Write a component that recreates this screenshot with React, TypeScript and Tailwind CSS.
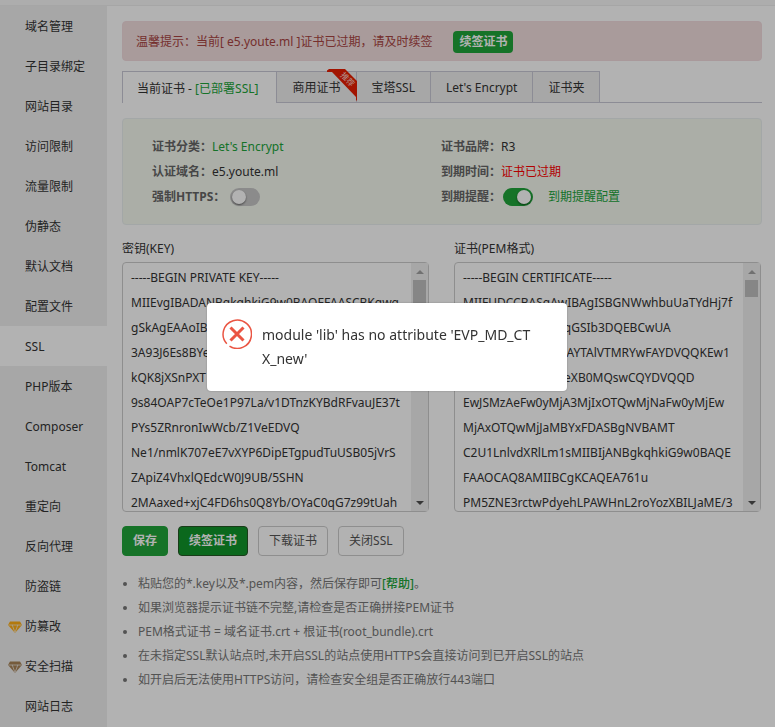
import { useState } from "react";
import clsx from "clsx";

interface MenuItem {
  label: string;
  gem?: "gold" | "bronze";
}

interface PemFieldProps {
  id: string;
  label: string;
  value: string;
  thumb: string;
  onChange: (value: string) => void;
}

const menuItems: MenuItem[] = [
  { label: "域名管理" },
  { label: "子目录绑定" },
  { label: "网站目录" },
  { label: "访问限制" },
  { label: "流量限制" },
  { label: "伪静态" },
  { label: "默认文档" },
  { label: "配置文件" },
  { label: "SSL" },
  { label: "PHP版本" },
  { label: "Composer" },
  { label: "Tomcat" },
  { label: "重定向" },
  { label: "反向代理" },
  { label: "防盗链" },
  { label: "防篡改", gem: "gold" },
  { label: "安全扫描", gem: "bronze" },
  { label: "网站日志" },
];

const privateKey = `-----BEGIN PRIVATE KEY-----
MIIEvgIBADANBgkqhkiG9w0BAQEFAASCBKgwg
gSkAgEAAoIBAQ
3A93J6Es8BYe
kQK8jXSnPXT
9s84OAP7cTeOe1P97La/v1DTnzKYBdRFvauJE37t
PYs5ZRnronIwWcb/Z1VeEDVQ
Ne1/nmlK707eE7vXYP6DipETgpudTuUSB05jVrS
ZApiZ4VhxlQEdcW0J9UB/5SHN
2MAaxed+xjC4FD6hs0Q8Yb/OYaC0qG7z99tUah`;

const certificate = `-----BEGIN CERTIFICATE-----
MIIFUDCCBASgAwIBAgISBGNWwhbuUaTYdHj7f
YHllKZ3wMA0GCSqGSIb3DQEBCwUA
QMDIxCzAJBgNVBAYTAlVTMRYwFAYDVQQKEw1
MZXQncyBFbmNyeXB0MQswCQYDVQQD
EwJSMzAeFw0yMjA3MjIxOTQwMjNaFw0yMjEw
MjAxOTQwMjJaMBYxFDASBgNVBAMT
C2U1LnlvdXRlLm1sMIIBIjANBgkqhkiG9w0BAQE
FAAOCAQ8AMIIBCgKCAQEA761u
PM5ZNE3rctwPdyehLPAWHnL2roYozXBILJaME/3`;

const Gem = ({ tone }: { tone: "gold" | "bronze" }) => (
  <svg
    viewBox="0 0 14 12"
    className={clsx(
      "h-3 w-3.5",
      tone === "gold" ? "text-[#ffae14]" : "text-[#a88357]"
    )}
    aria-hidden="true"
  >
    <path d="M2 0.5h10l2 3.5-7 8-7-8z" fill="currentColor" />
    <path
      d="M0.5 4h4M9.5 4h4M4.2 4l2.8 7.5M9.8 4l-2.8 7.5M4.2 4h5.6"
      fill="none"
      stroke="#f0f0f0"
      strokeWidth="0.7"
    />
  </svg>
);

const Ribbon = () => (
  <svg
    viewBox="0 0 32 32"
    className="absolute -top-[3px] -right-[3px] h-8 w-8"
    aria-hidden="true"
  >
    <path d="M0 1.5L2 0h16l13 13v17l-2 2v-4L5 3H0z" fill="#e81e00" />
    <text
      x="20"
      y="13"
      transform="rotate(45 20 11)"
      textAnchor="middle"
      fontSize="8"
      fill="#ffd9d2"
    >
      推荐
    </text>
  </svg>
);

const Switch = ({ id, initial }: { id: string; initial: boolean }) => {
  const [on, setOn] = useState(initial);

  return (
    <input
      id={id}
      type="checkbox"
      role="switch"
      checked={on}
      onChange={() => setOn(!on)}
      className="h-[18px] w-[30px] appearance-none rounded-full bg-[#c8c8c8] p-0.5 before:block before:size-3.5 before:rounded-full before:bg-white before:shadow-[0_1px_2px_rgba(0,0,0,0.5)] checked:bg-[#20a53a] checked:before:ml-3"
    />
  );
};

const PemField = ({ id, label, value, thumb, onChange }: PemFieldProps) => (
  <div className="min-w-0 flex-1">
    <label htmlFor={id} className="block leading-[26px]">
      {label}
    </label>
    <div className="flex h-[250px] rounded-sm border border-[#ccc]">
      <textarea
        id={id}
        value={value}
        wrap="off"
        onChange={(e) => onChange(e.target.value)}
        className="block min-w-0 flex-1 resize-none overflow-hidden py-0.5 pl-2 leading-[25px] outline-none"
      />
      <div className="flex w-[17px] flex-col items-center bg-[#f0f0f0]">
        <span className="flex h-[17px] shrink-0 items-center">
          <svg viewBox="0 0 8 4" className="h-1 w-2" aria-hidden="true">
            <path d="M0 4l4-4 4 4z" fill="#a3a3a3" />
          </svg>
        </span>
        <span className={clsx("w-[13px] bg-[#c1c1c1]", thumb)} />
        <span className="mt-auto flex h-[17px] shrink-0 items-center">
          <svg viewBox="0 0 8 4" className="h-1 w-2" aria-hidden="true">
            <path d="M0 0l4 4 4-4z" fill="#505050" />
          </svg>
        </span>
      </div>
    </div>
  </div>
);

const Tabs = () => {
  const [active, setActive] = useState(0);
  const tabs = [
    <>
      当前证书 - <span className="text-[#20a53a]">[已部署SSL]</span>
    </>,
    <>
      商用证书
      <Ribbon />
    </>,
    "宝塔SSL",
    "Let's Encrypt",
    "证书夹",
  ];

  return (
    <div role="tablist" className="mt-2.5 flex h-8">
      {tabs.map((tab, i) => (
        <button
          key={i}
          type="button"
          role="tab"
          aria-selected={active === i}
          onClick={() => setActive(i)}
          className={clsx(
            "relative h-full border-t border-r border-[#c9c9d6] pt-0.5 whitespace-nowrap",
            i === 0 ? "border-l pr-[18px] pl-3.5" : "px-[15px]",
            active === i ? "bg-white" : "border-b bg-[#f0f0f0]"
          )}
        >
          {tab}
        </button>
      ))}
      <div className="flex-1 border-b border-[#c9c9d6]" />
    </div>
  );
};

const CertInfo = () => (
  <div className="mt-[15px] grid grid-cols-[289px_1fr] rounded border border-[#eaf0f0] bg-[#f5f9f0] px-[29px] py-[15px] leading-[25px]">
    <div>
      <div className="flex">
        <b className="text-[#666]">证书分类：</b>
        <a href="#letsencrypt" className="text-[#20a53a]">
          Let's Encrypt
        </a>
      </div>
      <div className="flex">
        <b className="text-[#666]">认证域名：</b>
        <span>e5.youte.ml</span>
      </div>
      <div className="flex items-center gap-[5px]">
        <label htmlFor="force-https" className="font-bold text-[#666]">
          强制HTTPS：
        </label>
        <Switch id="force-https" initial={false} />
      </div>
    </div>
    <div>
      <div className="flex">
        <b className="text-[#666]">证书品牌：</b>
        <span>R3</span>
      </div>
      <div className="flex">
        <b className="text-[#666]">到期时间：</b>
        <span className="text-[#f00]">证书已过期</span>
      </div>
      <div className="flex items-center gap-0.5">
        <label htmlFor="expire-notice" className="font-bold text-[#666]">
          到期提醒：
        </label>
        <Switch id="expire-notice" initial />
        <a href="#notice" className="ml-[13px] text-[#20a53a]">
          到期提醒配置
        </a>
      </div>
    </div>
  </div>
);

const ErrorMessage = () => (
  <div className="fixed inset-0 flex items-center justify-center bg-black/30 pr-px pb-[33px]">
    <div
      role="alertdialog"
      aria-describedby="error-text"
      className="flex w-[360px] items-start gap-2.5 rounded-sm bg-white py-5 pr-8 pl-[15px] shadow-[0_0_2px_rgba(0,0,0,0.3)]"
    >
      <svg
        viewBox="0 0 30 30"
        className="-my-1 size-[30px] shrink-0"
        fill="none"
        stroke="#ea5543"
        aria-hidden="true"
      >
        <path d="M4.8 24.8A14.2 14.2 0 1 1 7.5 27.1" strokeWidth="1.5" />
        <path d="M8.5 8.5l13 13M21.5 8.5l-13 13" strokeWidth="3" />
      </svg>
      <p
        id="error-text"
        className="text-sm leading-6 break-all text-[#333]"
      >
        module 'lib' has no attribute 'EVP_MD_CTX_new'
      </p>
    </div>
  </div>
);

const App = () => {
  const [selected, setSelected] = useState("SSL");
  const [key, setKey] = useState(privateKey);
  const [pem, setPem] = useState(certificate);

  return (
    <div className="flex min-h-screen flex-col bg-white font-['Noto_Sans','Noto_Sans_CJK_SC',sans-serif] text-xs text-[#333]">
      <header className="h-1.5 border-b border-[#eee] bg-[#f8f8f8]" />
      <div className="flex flex-1">
        <nav className="w-[107px] shrink-0 bg-[#f0f0f0]">
          {menuItems.map((item) => (
            <button
              key={item.label}
              type="button"
              onClick={() => setSelected(item.label)}
              className={clsx(
                "flex h-10 w-full items-center pt-0.5",
                item.gem ? "gap-[3px] pl-2" : "pl-[25px]",
                selected === item.label && "bg-white"
              )}
            >
              {item.gem && <Gem tone={item.gem} />}
              {item.label}
            </button>
          ))}
        </nav>

        <main className="min-w-0 flex-1 pt-[15px] pr-[13px] pl-[15px]">
          <div
            role="alert"
            className="flex h-10 items-center gap-[21px] rounded border border-[#f2dbde] bg-[#f2dede] px-[13px] pt-0.5 text-[#a94442]"
          >
            <span>温馨提示：当前[ e5.youte.ml ]证书已过期，请及时续签</span>
            <button
              type="button"
              className="h-[22px] rounded-sm bg-[#20a53a] px-1.5 font-bold text-white"
            >
              续签证书
            </button>
          </div>

          <Tabs />
          <CertInfo />

          <div className="mt-[11px] flex gap-[25px] pr-px">
            <PemField
              id="key"
              label="密钥(KEY)"
              value={key}
              thumb="h-[30px]"
              onChange={setKey}
            />
            <PemField
              id="pem"
              label="证书(PEM格式)"
              value={pem}
              thumb="h-[17px]"
              onChange={setPem}
            />
          </div>

          <div className="mt-3.5 flex gap-2.5">
            <button
              type="button"
              className="h-[30px] rounded-sm border border-[#20a53a] bg-[#20a53a] px-2.5 font-bold text-white"
            >
              保存
            </button>
            <button
              type="button"
              className="h-[30px] rounded-sm border border-[#255625] bg-[#10952a] px-2.5 font-bold text-white"
            >
              续签证书
            </button>
            <button
              type="button"
              className="h-[30px] rounded-sm border border-[#ccc] px-2.5 text-[#555]"
            >
              下载证书
            </button>
            <button
              type="button"
              className="h-[30px] rounded-sm border border-[#ccc] px-2.5 text-[#555]"
            >
              关闭SSL
            </button>
          </div>

          <ul className="mt-4 list-disc pl-4 leading-6 text-[#777]">
            <li>
              粘贴您的*.key以及*.pem内容，然后保存即可
              <a href="#help" className="font-medium text-[#20a53a]">
                [帮助]
              </a>
              。
            </li>
            <li>如果浏览器提示证书链不完整,请检查是否正确拼接PEM证书</li>
            <li>PEM格式证书 = 域名证书.crt + 根证书(root_bundle).crt</li>
            <li>
              在未指定SSL默认站点时,未开启SSL的站点使用HTTPS会直接访问到已开启SSL的站点
            </li>
            <li>如开启后无法使用HTTPS访问，请检查安全组是否正确放行443端口</li>
          </ul>
        </main>
      </div>
      <ErrorMessage />
    </div>
  );
};

export default App;
